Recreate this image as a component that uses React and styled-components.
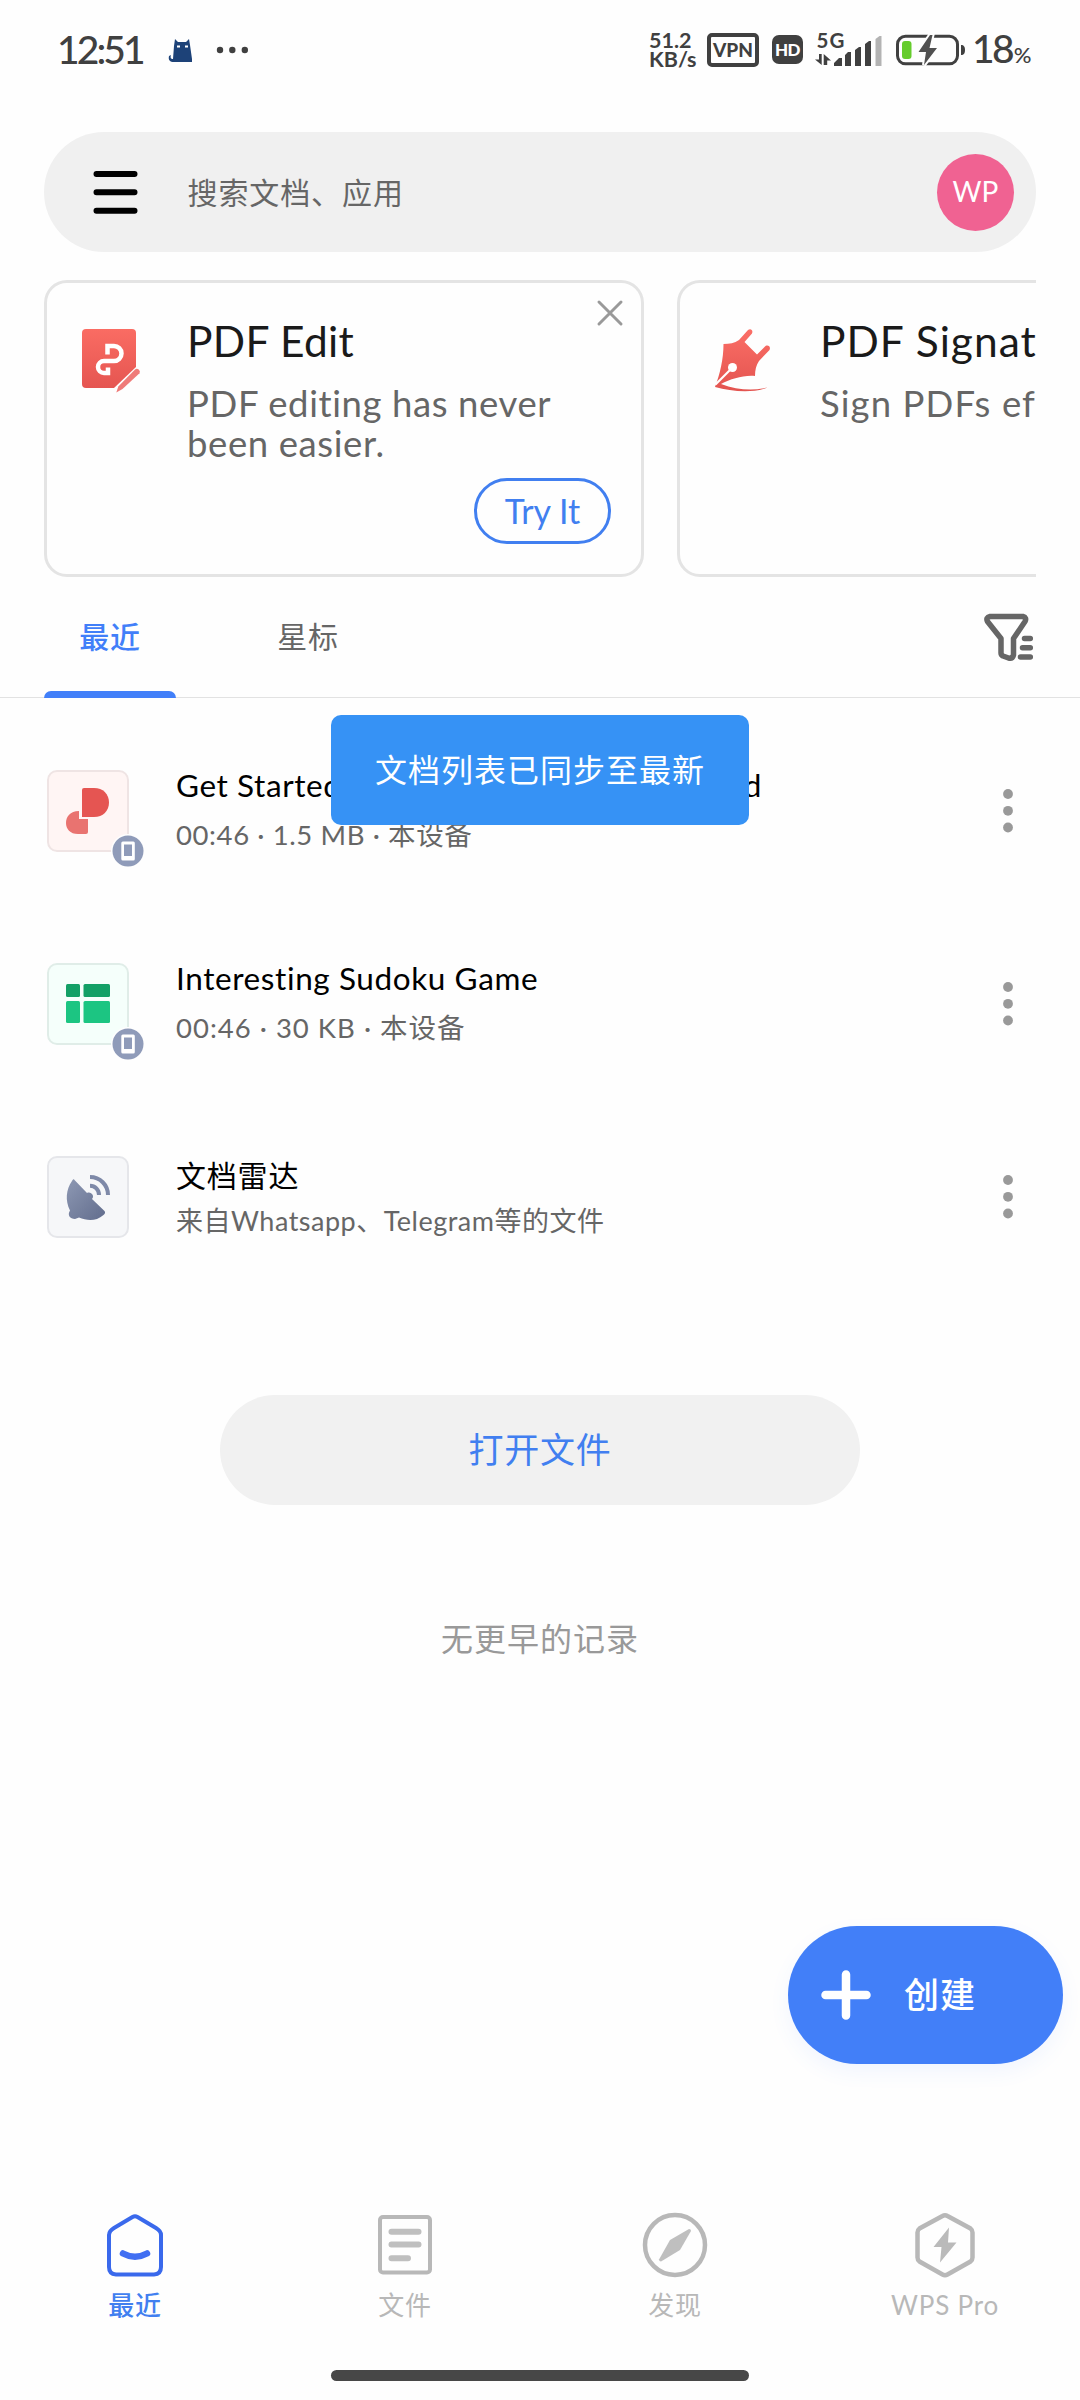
import React from "react";
import styled, { createGlobalStyle, css } from "styled-components";

const GlobalStyle = createGlobalStyle`
  * {
    box-sizing: border-box;
  }

  body {
    margin: 0;
    background: #fefefe;
    font-family: Lato, "Noto Sans CJK SC", sans-serif;
  }

  button {
    font-family: inherit;
    cursor: pointer;
  }

  svg {
    display: block;
    flex: none;
    overflow: visible;
  }
`;

const Screen = styled.div`
  position: relative;
  display: flex;
  flex-direction: column;
  width: 1080px;
  height: 2400px;
  overflow: hidden;
  background: #fefefe;
`;

/* Status bar */

const StatusBar = styled.div`
  display: flex;
  align-items: center;
  justify-content: space-between;
  height: 132px;
  padding: 0 50px 33px 57px;
  color: #404040;
`;

const StatusGroup = styled.div`
  display: flex;
  align-items: center;
`;

const Clock = styled.span`
  width: 84px;
  margin-top: -2px;
  font-size: 39px;
  line-height: 40px;
  font-weight: 500;
  letter-spacing: -2.9px;
  white-space: nowrap;
`;

const Speed = styled.div`
  width: 58px;
  margin-top: 1px;
  font-size: 21.5px;
  line-height: 19px;
  font-weight: 700;
  white-space: nowrap;
`;

const Vpn = styled.div`
  display: flex;
  align-items: center;
  justify-content: center;
  width: 52px;
  height: 34px;
  margin-right: 13px;
  border: 4px solid #404040;
  border-radius: 5px;
  font-size: 19px;
  line-height: 20px;
  font-weight: 900;
`;

const Hd = styled.div`
  display: flex;
  align-items: center;
  justify-content: center;
  width: 31px;
  height: 29px;
  margin-right: 11px;
  border-radius: 7px;
  background: #404040;
  color: #fff;
  font-size: 17px;
  line-height: 20px;
  font-weight: 900;
  letter-spacing: -0.5px;
`;

const Battery = styled.span`
  display: flex;
  align-items: baseline;
  width: 58px;
  margin: 3px 0 0 7px;
  font-size: 39px;
  line-height: 40px;
  font-weight: 500;
  letter-spacing: -2.7px;
  white-space: nowrap;

  small {
    margin-left: 2px;
    font-size: 22px;
    letter-spacing: 0;
  }
`;

/* Search */

const SearchBar = styled.div`
  display: flex;
  align-items: center;
  height: 120px;
  margin: 0 44px;
  padding: 0 22px 0 49px;
  border-radius: 60px;
  background: #f0f0f0;
`;

const Placeholder = styled.span`
  flex: 1;
  margin: -1px 0 0 48.5px;
  color: #666;
  font-size: 30px;
  line-height: 40px;
  letter-spacing: 0.9px;
`;

const Avatar = styled.div`
  display: flex;
  align-items: center;
  justify-content: center;
  width: 77px;
  height: 77px;
  padding-bottom: 2px;
  border-radius: 50%;
  background: #f06292;
  color: #fff;
  font-size: 28px;
  line-height: 36px;
`;

/* Promo cards */

const Cards = styled.div`
  display: flex;
  gap: 33px;
  height: 297px;
  margin: 28px 44px 0;
  overflow: hidden;
`;

const Card = styled.div`
  position: relative;
  display: flex;
  flex: none;
  width: 600px;
  padding: 41px 30px 0 34px;
  border: 3px solid #e4e4e4;
  border-radius: 23px;
`;

const CardIcon = styled.div`
  margin-top: 4px;
`;

const CardText = styled.div`
  display: flex;
  flex: 1;
  flex-direction: column;
  margin-left: 46px;
  white-space: nowrap;
`;

const CardTitle = styled.div`
  color: #1a1a1a;
  font-size: 42.5px;
  line-height: 34px;
  letter-spacing: ${props => props.$spacing || 0.3}px;
`;

const CardDesc = styled.div`
  margin-top: 25px;
  color: #666;
  font-size: 36.5px;
  line-height: 40px;
  letter-spacing: ${props => props.$spacing || 0.6}px;
`;

const TryButton = styled.button`
  align-self: flex-end;
  width: 137px;
  height: 66px;
  margin-top: 15px;
  padding: 0;
  border: 3px solid #417ff0;
  border-radius: 33px;
  background: transparent;
  color: #417ff0;
  font-size: 34px;
  line-height: 40px;
`;

const CloseIcon = styled.svg`
  position: absolute;
  top: 17px;
  right: 18px;
`;

/* Tabs */

const Tabs = styled.div`
  display: flex;
  height: 121px;
  padding: 0 44px;
  border-bottom: 1px solid #e2e2e2;
`;

const Tab = styled.div`
  position: relative;
  width: 132px;
  margin-right: 66px;
  padding-top: 37px;
  color: ${props => (props.$active ? "#417ff9" : "#666")};
  font-size: 30px;
  line-height: 44px;
  font-weight: ${props => (props.$active ? 500 : 400)};
  letter-spacing: 0.8px;
  text-align: center;

  ${props =>
    props.$active &&
    css`
      &::after {
        content: "";
        position: absolute;
        left: 0;
        bottom: -1px;
        width: 132px;
        height: 7px;
        border-radius: 7px 7px 0 0;
        background: #417ff9;
      }
    `}
`;

const FilterButton = styled.div`
  margin: 35px 0 0 auto;
`;

/* File list */

const FileList = styled.div`
  display: flex;
  flex-direction: column;
  padding: 16px 0 0 47px;
`;

const Row = styled.div`
  display: flex;
  align-items: center;
  height: 193px;
`;

const Thumb = styled.div`
  position: relative;
  display: flex;
  align-items: center;
  justify-content: center;
  width: 82px;
  height: 82px;
  margin-top: 1px;
  border: 2px solid ${props => props.$border};
  border-radius: 10px;
  background: ${props => props.$fill};
`;

const DeviceBadge = styled.svg`
  position: absolute;
  right: -18px;
  bottom: -18px;
`;

const RowText = styled.div`
  flex: 1;
  margin: ${props => (props.$cjk ? 2 : -2)}px 0 0 47px;
  white-space: nowrap;
`;

const RowTitle = styled.div`
  color: #000;
  font-size: ${props => (props.$cjk ? 30 : 31.5)}px;
  line-height: 46px;
  letter-spacing: ${props => props.$spacing || 0}px;
`;

const RowInfo = styled.div`
  margin-top: ${props => (props.$cjk ? 0 : 4)}px;
  color: #666;
  font-size: ${props => (props.$cjk ? 27 : 27.5)}px;
  line-height: 46px;
  letter-spacing: ${props => props.$spacing || 0}px;
`;

const MoreIcon = styled.svg`
  margin-right: 66px;
`;

const OpenButton = styled.button`
  align-self: center;
  width: 640px;
  height: 110px;
  margin-top: 102px;
  padding: 0 0 2px;
  border: 0;
  border-radius: 55px;
  background: #f1f1f1;
  color: #417ff0;
  font-size: 35px;
  line-height: 50px;
  letter-spacing: 0.8px;
`;

const EmptyHint = styled.div`
  margin-top: 109px;
  color: #999;
  font-size: 32px;
  line-height: 50px;
  letter-spacing: 1px;
  text-align: center;
`;

/* Floating parts */

const Toast = styled.div`
  position: absolute;
  top: 715px;
  left: 331px;
  display: flex;
  align-items: center;
  justify-content: center;
  width: 418px;
  height: 110px;
  padding-bottom: 1px;
  border-radius: 10px;
  background: #3692f5;
  color: #fff;
  font-size: 32px;
  line-height: 44px;
  letter-spacing: 1px;
  white-space: nowrap;
`;

const CreateButton = styled.button`
  position: absolute;
  top: 1926px;
  left: 788px;
  display: flex;
  align-items: center;
  width: 275px;
  height: 138px;
  padding: 0 0 0 33px;
  border: 0;
  border-radius: 69px;
  background: #427ff8;
  box-shadow: 0 8px 20px rgba(66, 127, 248, 0.07);
  color: #fff;
  font-size: 35px;
  line-height: 44px;
  font-weight: 500;
  letter-spacing: 1px;

  span {
    margin: -3px 0 0 33px;
  }
`;

/* Bottom navigation */

const BottomNav = styled.div`
  display: grid;
  grid-template-columns: repeat(4, 1fr);
  height: 158px;
  margin-top: auto;
`;

const NavItem = styled.div`
  display: flex;
  flex-direction: column;
  align-items: center;
  color: ${props => (props.$active ? "#417ff0" : "#b8b8b8")};
  font-size: 26px;
  line-height: 36px;
  font-weight: ${props => (props.$active ? 500 : 400)};
  letter-spacing: 0.8px;

  svg {
    margin-bottom: 9px;
  }
`;

const HomeIndicator = styled.div`
  width: 418px;
  height: 11px;
  margin: 0 auto 19px;
  border-radius: 6px;
  background: #474747;
`;

/* Icons */

const CatSvg = styled.svg`
  margin-left: 22px;
`;

const DotsSvg = styled.svg`
  margin-left: 17px;
`;

const BatterySvg = styled.svg`
  margin-left: 13px;
`;

const CatIcon = () => (
  <CatSvg width="36" height="36" viewBox="0 0 36 36">
    <path
      d="M12 7l3 3h8l3-3 1 6 2 14v3H11c-4 0-6-2-5-6l2-1c-1 3 0 4 2 4l1-13z"
      fill="#1d4278"
    />
    <path d="M14 14.500h3M22 14.500h3" stroke="#fff" strokeWidth="2" />
  </CatSvg>
);

const MoreDots = () => (
  <DotsSvg width="32" height="8" viewBox="0 0 32 8">
    <g fill="#404040">
      <circle cx="4" cy="4" r="3.200" />
      <circle cx="16.300" cy="4" r="3.200" />
      <circle cx="28.800" cy="4" r="3.200" />
    </g>
  </DotsSvg>
);

const SignalIcon = () => (
  <svg width="68" height="36" viewBox="814 31 68 36">
    <text
      x="816.500"
      y="47"
      fontSize="20.500"
      fontWeight="700"
      fill="#404040"
      textLength="28"
    >
      5G
    </text>
    <g fill="#404040">
      <path d="M819 53h2.700v11L815 58.500h4zM823.700 64V53l7.300 6.500h-3.800V64z" />
      <path d="M834 65v-3l5-5h3v8zM845 65V54l3-3h3v14zM855 65V49l4-3h2v19zM865 65V43l4-3h2v25z" />
    </g>
    <path d="M875.500 65V38l4-3h2v30z" fill="#b3b3b3" />
  </svg>
);

const BatteryIcon = () => (
  <BatterySvg width="70" height="34" viewBox="895 32 70 34">
    <rect
      x="897.500"
      y="35.300"
      width="60"
      height="27.500"
      rx="8"
      fill="none"
      stroke="#404040"
      strokeWidth="3"
    />
    <rect x="902" y="40" width="9.500" height="18" rx="3" fill="#65cc2c" />
    <path
      d="M930 34L918.500 51h7.500l-2 13 13-17h-7.500l3-13z"
      fill="#505050"
      stroke="#fefefe"
      strokeWidth="4"
      paintOrder="stroke"
    />
    <path d="M961 44c3 0 4 2 4 5s-1 5-4 5z" fill="#404040" />
  </BatterySvg>
);

const MenuIcon = () => (
  <svg width="46" height="44" viewBox="0 0 46 44">
    <path
      d="M3.500 4h38M3.500 22.300h38M3.500 40.700h38"
      stroke="#000"
      strokeWidth="6"
      strokeLinecap="round"
    />
  </svg>
);

const PdfEditIcon = () => (
  <svg width="60" height="66" viewBox="81 328 60 66">
    <defs>
      <linearGradient id="editRed" x1="0" y1="0" x2="0" y2="1">
        <stop offset="0" stopColor="#fa6c63" />
        <stop offset="1" stopColor="#e55551" />
      </linearGradient>
    </defs>
    <path
      d="M86 329h46q4 0 4 4v34l-22 21H86q-4 0-4-4v-51q0-4 4-4z"
      fill="url(#editRed)"
    />
    <path
      d="M107.500 354.500v-8.500h6.500a7.500 7.500 0 0 1 0 15h-10a6 6 0 0 0 0 12h4v-5.500"
      fill="none"
      stroke="#fff"
      strokeWidth="4.500"
    />
    <path
      d="M116.300 392.500l2-6 16.500-16.800a3 3 0 0 1 4.700 3.600L122.500 389z"
      fill="#ef7a78"
    />
  </svg>
);

const SignIcon = () => (
  <svg width="60" height="66" viewBox="715 328 60 66">
    <defs>
      <linearGradient id="signRed" x1="0" y1="0" x2="0" y2="1">
        <stop offset="0" stopColor="#fb6e66" />
        <stop offset="1" stopColor="#e35450" />
      </linearGradient>
    </defs>
    <path
      d="M724.500 344c6 0 11-1 15.500-4l9-10c2.500-2 5.500 0 4 3.500l-7.500 8.500 12.500 12.500 8.500-8.500c3-1.500 5.500 1 4 4L760 361c-2.800 4-4 9-4 15-12-1-24 3-34 8 16 6 32 7 46.500 3.500-15 6-36 4-52.500-.5 5-13 8.500-28 8.500-43z"
      fill="url(#signRed)"
    />
    <path d="M716.500 384.500L733 368" stroke="#fff" strokeWidth="2.200" />
    <circle cx="733.500" cy="367.500" r="4.500" fill="#fff" />
  </svg>
);

const FilterIcon = () => (
  <svg width="52" height="50" viewBox="984 612 52 50">
    <path
      d="M990 616.500h33q4 1 2 5l-11.500 17V655q-1 4-5 3l-5.500-2q-2-1-2-3v-14.500l-13.500-17q-2-4 2.500-5z"
      fill="none"
      stroke="#666"
      strokeWidth="5.500"
      strokeLinejoin="round"
    />
    <path
      d="M1024.500 638.500h5.800M1022.500 647.700h7.800M1020.500 657h9.800"
      stroke="#666"
      strokeWidth="5.500"
      strokeLinecap="round"
    />
  </svg>
);

const PdfFileIcon = () => (
  <svg width="44" height="48" viewBox="0 0 44 48">
    <path
      d="M13 24v8h9v13q0 2-2 2H12C4 47 0 42 0 36s4-12 13-12z"
      fill="#e97370"
    />
    <path
      d="M18 1h10c9 0 15 6 15 14.500S37 30 28 30H16V3q0-2 2-2z"
      fill="#e55552"
    />
  </svg>
);

const SheetIcon = () => (
  <svg width="44" height="40" viewBox="0 0 44 40">
    <g fill="#13a066">
      <rect width="14" height="13" rx="1.500" />
      <rect x="17.500" width="26.500" height="13" rx="1.500" />
    </g>
    <g fill="#1cc582">
      <rect y="17" width="14" height="22" rx="1.500" />
      <rect x="17.500" y="17" width="26.500" height="22" rx="1.500" />
    </g>
  </svg>
);

const RadarIcon = () => (
  <svg width="44" height="46" viewBox="66 1173 44 46">
    <defs>
      <linearGradient id="radar" x1="0" y1="0" x2="1" y2="1">
        <stop offset="0" stopColor="#8d98b3" />
        <stop offset="1" stopColor="#626d8d" />
      </linearGradient>
    </defs>
    <path
      d="M74.500 1179l12.500 13c4-2 8 3 5 6l12.500 12q1.500 2-1 4c-8 7-17 5.500-24.500 2.500l-4 1.500c-5 0-8-4-5-8.500-5-10-4-21 2-29.500 1-2 2-2 2.500-1z"
      fill="url(#radar)"
    />
    <path
      d="M90 1184.800c5 0 9 4 9 9.200M90 1176c10 0 18 8 18 18"
      fill="none"
      stroke="#7e89a8"
      strokeWidth="4"
    />
  </svg>
);

const Badge = () => (
  <DeviceBadge width="34" height="34" viewBox="0 0 34 34">
    <circle cx="17" cy="17" r="17" fill="#fefefe" />
    <circle cx="17" cy="17" r="15.500" fill="#8f9bb9" />
    <rect x="10.300" y="7.500" width="13.500" height="19" rx="1.500" fill="#fff" />
    <rect x="13" y="10.500" width="8" height="11.500" fill="#8f9bb9" />
  </DeviceBadge>
);

const More = () => (
  <MoreIcon width="12" height="46" viewBox="0 0 12 46">
    <g fill="#999">
      <circle cx="6" cy="6" r="4.900" />
      <circle cx="6" cy="22.800" r="4.900" />
      <circle cx="6" cy="39.500" r="4.900" />
    </g>
  </MoreIcon>
);

const HomeIcon = () => (
  <svg width="66" height="66" viewBox="642 2212 66 66">
    <path
      d="M672.500 2217q2.500-1.500 5 0l18.500 11q5 3 5 7v32q0 7-7 7.500h-38q-7-.5-7-7.500v-32q0-4 5-7z"
      fill="none"
      stroke="#3a69ec"
      strokeWidth="4"
    />
    <path
      d="M663 2253.500q12 6.500 24 0"
      fill="none"
      stroke="#416ff2"
      strokeWidth="6.500"
      strokeLinecap="round"
    />
  </svg>
);

const FilesIcon = () => (
  <svg width="66" height="66" viewBox="372 2212 66 66">
    <rect
      x="380"
      y="2217"
      width="50"
      height="55.500"
      rx="3"
      fill="none"
      stroke="#b8b8b8"
      strokeWidth="4"
    />
    <path
      d="M391.500 2231.700h27M391.500 2244.500h27M391.500 2258.300h16.500"
      stroke="#bfbfbf"
      strokeWidth="6"
      strokeLinecap="round"
    />
  </svg>
);

const CompassIcon = () => (
  <svg width="66" height="66" viewBox="642 2212 66 66">
    <circle
      cx="675"
      cy="2245"
      r="30"
      fill="none"
      stroke="#b8b8b8"
      strokeWidth="4.500"
    />
    <path
      d="M689 2229q2 0 2 2l-11 19-19 11.500q-2 0-2-2l11-19.500z"
      fill="#bfbfbf"
    />
  </svg>
);

const ProIcon = () => (
  <svg width="66" height="66" viewBox="912 2212 66 66">
    <path
      d="M942.500 2216q2.500-1.500 5 0l23 12.500q2 1.500 2 4v25q0 2.500-2 4l-23 13q-2.500 1.500-5 0l-23-13q-2-1.500-2-4v-25q0-2.500 2-4z"
      fill="none"
      stroke="#b8b8b8"
      strokeWidth="4.500"
    />
    <path d="M949 2227.500l-15.500 19.500h8l-1.500 15.500 16.500-20h-8.500z" fill="#bababa" />
  </svg>
);

const files = [
  {
    title: "Get Started with WPS Office for Android",
    info: "00:46 · 1.5 MB · 本设备",
    icon: <PdfFileIcon />,
    fill: "#fff5f4",
    border: "#efe4e4",
    titleSpacing: 0.6,
    infoSpacing: 0.6,
    badge: true
  },
  {
    title: "Interesting Sudoku Game",
    info: "00:46 · 30 KB · 本设备",
    icon: <SheetIcon />,
    fill: "#f5fffb",
    border: "#e0ede8",
    titleSpacing: 0.6,
    infoSpacing: 1,
    badge: true
  },
  {
    title: "文档雷达",
    info: "来自Whatsapp、Telegram等的文件",
    icon: <RadarIcon />,
    fill: "#f6f7f9",
    border: "#e5e6ea",
    titleSpacing: 0.8,
    infoSpacing: 0.5,
    cjk: true
  }
];

const navItems = [
  { label: "最近", icon: <HomeIcon />, active: true },
  { label: "文件", icon: <FilesIcon /> },
  { label: "发现", icon: <CompassIcon /> },
  { label: "WPS Pro", icon: <ProIcon /> }
];

const App = () => {
  return (
    <Screen>
      <GlobalStyle />
      <StatusBar>
        <StatusGroup>
          <Clock>12:51</Clock>
          <CatIcon />
          <MoreDots />
        </StatusGroup>
        <StatusGroup>
          <Speed>
            51.2
            <br />
            KB/s
          </Speed>
          <Vpn>VPN</Vpn>
          <Hd>HD</Hd>
          <SignalIcon />
          <BatteryIcon />
          <Battery>
            18<small>%</small>
          </Battery>
        </StatusGroup>
      </StatusBar>

      <SearchBar>
        <MenuIcon />
        <Placeholder>搜索文档、应用</Placeholder>
        <Avatar>WP</Avatar>
      </SearchBar>

      <Cards>
        <Card>
          <CardIcon>
            <PdfEditIcon />
          </CardIcon>
          <CardText>
            <CardTitle>PDF Edit</CardTitle>
            <CardDesc>
              PDF editing has never
              <br />
              been easier.
            </CardDesc>
            <TryButton>Try It</TryButton>
          </CardText>
          <CloseIcon width="26" height="26" viewBox="0 0 26 26">
            <path
              d="M2 2l22 22M24 2L2 24"
              stroke="#999"
              strokeWidth="3"
              strokeLinecap="round"
            />
          </CloseIcon>
        </Card>
        <Card>
          <CardIcon>
            <SignIcon />
          </CardIcon>
          <CardText>
            <CardTitle $spacing={1}>PDF Signature</CardTitle>
            <CardDesc $spacing={1.1}>Sign PDFs effortlessly</CardDesc>
          </CardText>
        </Card>
      </Cards>

      <Tabs>
        <Tab $active>最近</Tab>
        <Tab>星标</Tab>
        <FilterButton>
          <FilterIcon />
        </FilterButton>
      </Tabs>

      <FileList>
        {files.map(file => (
          <Row key={file.title}>
            <Thumb $fill={file.fill} $border={file.border}>
              {file.icon}
              {file.badge && <Badge />}
            </Thumb>
            <RowText $cjk={file.cjk}>
              <RowTitle $cjk={file.cjk} $spacing={file.titleSpacing}>
                {file.title}
              </RowTitle>
              <RowInfo $cjk={file.cjk} $spacing={file.infoSpacing}>
                {file.info}
              </RowInfo>
            </RowText>
            <More />
          </Row>
        ))}
      </FileList>

      <OpenButton>打开文件</OpenButton>
      <EmptyHint>无更早的记录</EmptyHint>

      <BottomNav>
        {navItems.map(item => (
          <NavItem key={item.label} $active={item.active}>
            {item.icon}
            {item.label}
          </NavItem>
        ))}
      </BottomNav>
      <HomeIndicator />

      <Toast>文档列表已同步至最新</Toast>
      <CreateButton>
        <svg width="50" height="50" viewBox="0 0 50 50">
          <path
            d="M4.500 25h41M25 4.500v41"
            stroke="#fff"
            strokeWidth="8.500"
            strokeLinecap="round"
          />
        </svg>
        <span>创建</span>
      </CreateButton>
    </Screen>
  );
};

export default App;
